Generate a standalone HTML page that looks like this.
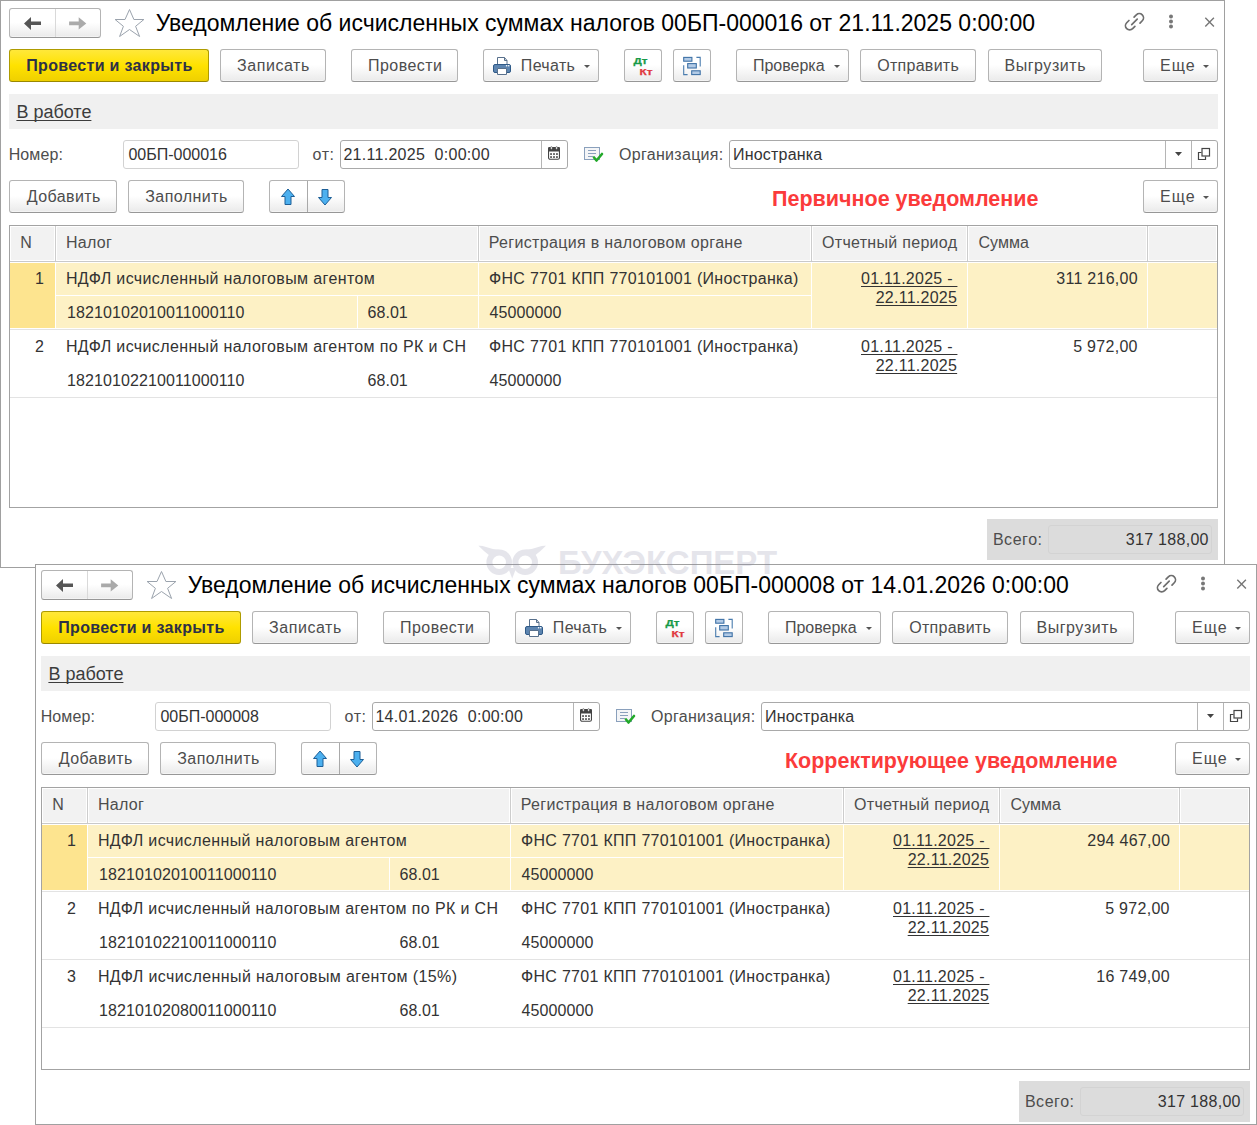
<!DOCTYPE html>
<html><head><meta charset="utf-8"><style>
html,body{margin:0;padding:0;}
body{width:1257px;height:1125px;overflow:hidden;position:relative;background:#fff;font-family:"Liberation Sans", sans-serif;}
.frame{position:absolute;border:1px solid #a0a0a0;box-sizing:border-box;background:#fff;}
.win{position:absolute;left:0;top:0;width:1257px;height:1125px;}
.t{position:absolute;line-height:1;white-space:pre;}
.r{position:absolute;}
.btn{position:absolute;box-sizing:border-box;border:1px solid #b4b4b4;border-bottom-color:#979797;border-radius:3px;background:linear-gradient(#ffffff 0%,#ffffff 48%,#eaeaea 100%);box-shadow:inset 0 -1px 0 rgba(255,255,255,.45);}
.yel{background:linear-gradient(#ffe83a 0%,#ffe200 50%,#efd000 100%);border-color:#ae9b00;border-bottom-color:#9a8800;box-shadow:none;}
</style></head><body>
<div class="frame" style="left:0;top:0;width:1225px;height:568px"></div>
<div class="win">
<div class="btn" style="left:9px;top:8px;width:92px;height:30px"></div>
<div class="r" style="left:55px;top:9px;width:1px;height:28px;background:#d9d9d9"></div>
<svg class="r" style="left:0;top:0" width="100" height="40"><path d="M24 23.5L31 17V21.6H41V25.1H31V30Z" fill="#555"/><path d="M86.3 23.4L78.7 17.2V21.5H69.1V25.3H78.7V29.6Z" fill="#aaa"/></svg>
<svg class="r" style="left:110px;top:5px" width="40" height="35"><path d="M19.5 4.5L23.9 14.5H33.9L25.6 21.3L29.6 31.5L19.5 24.5L9.6 31.5L13.4 21.3L5.1 14.5H15Z" fill="none" stroke="#9ba3ad" stroke-width="1"/></svg>
<div class="t" style="left:155.70px;top:12px;font-size:23px;color:#000;">Уведомление об исчисленных суммах налогов 00БП-000016 от 21.11.2025 0:00:00</div>
<svg class="r" style="left:1120px;top:8px" width="30" height="28"><g fill="none" stroke="#6e6e6e" stroke-width="1.7" stroke-linecap="round"><path d="M8.96 12.5L6.7 14.76A4.2 4.2 0 0 0 12.64 20.7L14.9 18.44"/><path d="M20.01 15.03L22.27 12.77A4.2 4.2 0 0 0 16.33 6.83L14.07 9.09"/><path d="M11.7 16.7L17.2 11.2"/></g></svg>
<svg class="r" style="left:1165px;top:12px" width="12" height="20"><g fill="#777"><circle cx="6" cy="4.4" r="2"/><circle cx="6" cy="9.4" r="2"/><circle cx="6" cy="14.4" r="2"/></g></svg>
<svg class="r" style="left:1200px;top:12px" width="20" height="20"><path d="M5.3 5.7L13.9 14.4M13.9 5.7L5.3 14.4" stroke="#777" stroke-width="1.4"/></svg>
<div class="btn yel" style="left:9px;top:49px;width:200px;height:33px"></div>
<div class="t" style="left:26.20px;top:58px;font-size:16px;color:#2d3047;font-weight:bold;letter-spacing:0.335px;">Провести и закрыть</div>
<div class="btn" style="left:220px;top:49px;width:106px;height:33px"></div>
<div class="t" style="left:236.90px;top:58px;font-size:16px;color:#4d4d4d;letter-spacing:0.586px;">Записать</div>
<div class="btn" style="left:351px;top:49px;width:107px;height:33px"></div>
<div class="t" style="left:368.10px;top:58px;font-size:16px;color:#4d4d4d;letter-spacing:0.429px;">Провести</div>
<div class="btn" style="left:860px;top:49px;width:116px;height:33px"></div>
<div class="t" style="left:877.20px;top:58px;font-size:16px;color:#4d4d4d;letter-spacing:0.287px;">Отправить</div>
<div class="btn" style="left:988px;top:49px;width:114px;height:33px"></div>
<div class="t" style="left:1004.40px;top:58px;font-size:16px;color:#4d4d4d;letter-spacing:0.563px;">Выгрузить</div>
<div class="btn" style="left:483px;top:49px;width:116px;height:33px"></div>
<svg class="r" style="left:490px;top:54px" width="24" height="24"><path d="M7.5 10V3.5H14.5L17 6.5V10" fill="#fff" stroke="#58708c" stroke-width="1"/><path d="M14.5 3.5V6.5H17" fill="none" stroke="#58708c" stroke-width="1"/><rect x="3.5" y="10.5" width="17" height="8" rx="1.5" fill="#5d85b0" stroke="#2f5a88" stroke-width="1"/><path d="M7.5 14.5H16.5V20.5H7.5Z" fill="#fff" stroke="#58708c" stroke-width="1"/><circle cx="16.6" cy="11.8" r="0.8" fill="#fff"/><circle cx="18.7" cy="11.8" r="0.8" fill="#fff"/></svg>
<div class="t" style="left:520.80px;top:58px;font-size:16px;color:#4d4d4d;letter-spacing:0.34px;">Печать</div>
<svg class="r" style="left:584px;top:65px" width="6" height="3" viewBox="0 0 6 3"><path d="M0 0H6L3 3Z" fill="#555"/></svg>
<div class="btn" style="left:624px;top:49px;width:38px;height:33px"></div>
<svg class="r" style="left:624px;top:49px" width="38" height="33" viewBox="624 49 38 33"><text x="633.5" y="64.3" font-family="Liberation Sans" font-weight="bold" font-size="9.2" textLength="14" lengthAdjust="spacingAndGlyphs" fill="#179a48" stroke="#179a48" stroke-width=".25">Дт</text><text x="639.6" y="74.9" font-family="Liberation Sans" font-weight="bold" font-size="9" textLength="13" lengthAdjust="spacingAndGlyphs" fill="#e0393f" stroke="#e0393f" stroke-width=".25">Кт</text></svg>
<div class="btn" style="left:673px;top:49px;width:38px;height:33px"></div>
<svg class="r" style="left:680px;top:54px" width="24" height="24"><g fill="#b3cbe6" stroke="#3f72a6" stroke-width="1.1"><rect x="3.7" y="3.4" width="8.2" height="3.8"/><rect x="7.7" y="9.6" width="8.6" height="4.4"/><rect x="11.7" y="16.8" width="8.5" height="3.8"/></g><path d="M16.4 3.4H20.2V12.5M3.7 11.3V20.6H7.6" fill="none" stroke="#4a7cae" stroke-width="1.1"/></svg>
<div class="btn" style="left:736px;top:49px;width:113px;height:33px"></div>
<div class="t" style="left:752.90px;top:58px;font-size:16px;color:#4d4d4d;">Проверка</div>
<svg class="r" style="left:834px;top:65px" width="6" height="3" viewBox="0 0 6 3"><path d="M0 0H6L3 3Z" fill="#555"/></svg>
<div class="btn" style="left:1143px;top:49px;width:75px;height:33px"></div>
<div class="t" style="left:1160.10px;top:58px;font-size:16px;color:#4d4d4d;letter-spacing:1.0px;">Еще</div>
<svg class="r" style="left:1203px;top:65px" width="6" height="3" viewBox="0 0 6 3"><path d="M0 0H6L3 3Z" fill="#555"/></svg>
<div class="r" style="left:9px;top:94px;width:1209px;height:35px;background:#f0f0f0"></div>
<div class="t" style="left:16.40px;top:103px;font-size:18px;color:#3c3c3c;text-decoration:underline;text-underline-offset:2px;text-decoration-skip-ink:none;">В работе</div>
<div class="t" style="left:8.70px;top:147px;font-size:16px;color:#4d4d4d;letter-spacing:0.1px;">Номер:</div>
<div class="r" style="left:123px;top:140px;width:176px;height:29px;border:1px solid #d2d2d2;border-radius:3px;background:#fff;box-sizing:border-box"></div>
<div class="t" style="left:128.40px;top:147px;font-size:16px;color:#333;">00БП-000016</div>
<div class="t" style="left:312.60px;top:147px;font-size:16px;color:#4d4d4d;letter-spacing:0.5px;">от:</div>
<div class="r" style="left:340px;top:140px;width:228px;height:29px;border:1px solid #a9a9a9;border-radius:3px;background:#fff;box-sizing:border-box"></div>
<div class="r" style="left:541px;top:141px;width:1px;height:27px;background:#b5b5b5"></div>
<div class="t" style="left:343.40px;top:147px;font-size:16px;color:#333;letter-spacing:0.283px;">21.11.2025  0:00:00</div>
<svg class="r" style="left:547px;top:146px" width="14" height="15"><rect x="1.55" y="1.55" width="10.9" height="11.7" rx="1.6" fill="#fff" stroke="#444" stroke-width="1.1"/><rect x="1" y="1" width="12" height="4.6" rx="1.4" fill="#444"/><rect x="3.6" y="0.6" width="1.6" height="2.8" rx=".8" fill="#fff" stroke="#444" stroke-width=".5"/><rect x="8.8" y="0.6" width="1.6" height="2.8" rx=".8" fill="#fff" stroke="#444" stroke-width=".5"/><g fill="#444"><rect x="3.2" y="7.2" width="1.7" height="1.7"/><rect x="6.15" y="7.2" width="1.7" height="1.7"/><rect x="9.1" y="7.2" width="1.7" height="1.7"/><rect x="3.2" y="10.2" width="1.7" height="1.7"/><rect x="6.15" y="10.2" width="1.7" height="1.7"/><rect x="9.1" y="10.2" width="1.7" height="1.7"/></g></svg>
<svg class="r" style="left:583px;top:146px" width="22" height="18"><rect x="1.5" y="1.5" width="15" height="12" fill="#f4f5f7" stroke="#8aa0bc" stroke-width="1"/><path d="M5 4.5H13M5 7.5H13M5 10.5H10" stroke="#8aa0bc" stroke-width="1"/><path d="M11 11.5L13.5 14.5L19 8" fill="none" stroke="#22a92a" stroke-width="2.6" stroke-linecap="round" stroke-linejoin="round"/></svg>
<div class="t" style="left:619.10px;top:147px;font-size:16px;color:#4d4d4d;letter-spacing:0.29px;">Организация:</div>
<div class="r" style="left:729px;top:140px;width:489px;height:29px;border:1px solid #a9a9a9;border-radius:3px;background:#fff;box-sizing:border-box"></div>
<div class="r" style="left:1165px;top:141px;width:1px;height:27px;background:#b5b5b5"></div>
<div class="r" style="left:1191px;top:141px;width:1px;height:27px;background:#b5b5b5"></div>
<div class="t" style="left:733.00px;top:147px;font-size:16px;color:#333;letter-spacing:0.2px;">Иностранка</div>
<svg class="r" style="left:1175px;top:152px" width="7" height="4"><path d="M0 0H7L3.5 4Z" fill="#444"/></svg>
<svg class="r" style="left:1196px;top:146px" width="16" height="16"><path d="M5.5 6.5H2.5V13.5H9.5V10.5" fill="none" stroke="#444" stroke-width="1.2"/><rect x="6" y="2.5" width="7.5" height="7.5" fill="none" stroke="#444" stroke-width="1.2"/></svg>
<div class="btn" style="left:9px;top:180px;width:108px;height:33px"></div>
<div class="t" style="left:26.80px;top:189px;font-size:16px;color:#4d4d4d;letter-spacing:0.414px;">Добавить</div>
<div class="btn" style="left:128px;top:180px;width:116px;height:33px"></div>
<div class="t" style="left:145.20px;top:189px;font-size:16px;color:#4d4d4d;letter-spacing:0.45px;">Заполнить</div>
<div class="btn" style="left:269px;top:180px;width:76px;height:33px"></div>
<div class="r" style="left:307px;top:181px;width:1px;height:31px;background:#a9a9a9"></div>
<svg class="r" style="left:278px;top:186px" width="60" height="22"><path d="M3.5 10.5L10 3L16.5 10.5H13V18.5H7V10.5Z" fill="#4cb0ef" stroke="#1d5f97" stroke-width="1" stroke-linejoin="round"/><path d="M40.5 11.5L47 19L53.5 11.5H50V3.5H44V11.5Z" fill="#4cb0ef" stroke="#1d5f97" stroke-width="1" stroke-linejoin="round"/></svg>
<div class="t" style="left:772.17px;top:188px;font-size:22px;font-weight:bold;color:#fb3b3b;transform:scaleX(0.978);transform-origin:0 0">Первичное уведомление</div>
<div class="btn" style="left:1143px;top:180px;width:75px;height:33px"></div>
<div class="t" style="left:1160.10px;top:189px;font-size:16px;color:#4d4d4d;letter-spacing:1.0px;">Еще</div>
<svg class="r" style="left:1203px;top:196px" width="6" height="3" viewBox="0 0 6 3"><path d="M0 0H6L3 3Z" fill="#555"/></svg>
<div class="r" style="left:9px;top:225px;width:1209px;height:283px;border:1px solid #a3a3a3;box-sizing:border-box;background:#fff"></div>
<div class="r" style="left:11px;top:227px;width:1205px;height:33px;background:#f2f2f2"></div>
<div class="r" style="left:10px;top:261px;width:1207px;height:1px;background:#c9c9c9"></div>
<div class="r" style="left:54px;top:227px;width:3px;height:33px;background:#fff"></div>
<div class="r" style="left:55px;top:226px;width:1px;height:35px;background:#cdcdcd"></div>
<div class="r" style="left:477px;top:227px;width:3px;height:33px;background:#fff"></div>
<div class="r" style="left:478px;top:226px;width:1px;height:35px;background:#cdcdcd"></div>
<div class="r" style="left:810px;top:227px;width:3px;height:33px;background:#fff"></div>
<div class="r" style="left:811px;top:226px;width:1px;height:35px;background:#cdcdcd"></div>
<div class="r" style="left:966px;top:227px;width:3px;height:33px;background:#fff"></div>
<div class="r" style="left:967px;top:226px;width:1px;height:35px;background:#cdcdcd"></div>
<div class="r" style="left:1146px;top:227px;width:3px;height:33px;background:#fff"></div>
<div class="r" style="left:1147px;top:226px;width:1px;height:35px;background:#cdcdcd"></div>
<div class="t" style="left:20.30px;top:235px;font-size:16px;color:#4d4d4d;">N</div>
<div class="t" style="left:65.90px;top:235px;font-size:16px;color:#4d4d4d;letter-spacing:0.3px;">Налог</div>
<div class="t" style="left:488.80px;top:235px;font-size:16px;color:#4d4d4d;letter-spacing:0.331px;">Регистрация в налоговом органе</div>
<div class="t" style="left:822.10px;top:235px;font-size:16px;color:#4d4d4d;letter-spacing:0.293px;">Отчетный период</div>
<div class="t" style="left:978.40px;top:235px;font-size:16px;color:#4d4d4d;letter-spacing:0.075px;">Сумма</div>
<div class="r" style="left:10px;top:263px;width:1207px;height:65px;background:#fdf1c5"></div>
<div class="r" style="left:10px;top:263px;width:45px;height:65px;background:#fde48f"></div>
<div class="r" style="left:55px;top:263px;width:1px;height:66px;background:#fff"></div>
<div class="r" style="left:56px;top:295px;width:755px;height:1px;background:#fff"></div>
<div class="r" style="left:357px;top:296px;width:1px;height:33px;background:#fff"></div>
<div class="r" style="left:478px;top:263px;width:1px;height:66px;background:#fff"></div>
<div class="r" style="left:811px;top:263px;width:1px;height:66px;background:#fff"></div>
<div class="r" style="left:967px;top:263px;width:1px;height:66px;background:#fff"></div>
<div class="r" style="left:1147px;top:263px;width:1px;height:66px;background:#fff"></div>
<div class="r" style="left:10px;top:329px;width:1207px;height:1px;background:#e3e3e3"></div>
<div class="t" style="left:35.00px;top:271px;font-size:16px;color:#333;">1</div>
<div class="t" style="left:65.90px;top:271px;font-size:16px;color:#333;letter-spacing:0.37px;">НДФЛ исчисленный налоговым агентом</div>
<div class="t" style="left:67.10px;top:305px;font-size:16px;color:#333;letter-spacing:0.095px;">18210102010011000110</div>
<div class="t" style="left:367.50px;top:305px;font-size:16px;color:#333;letter-spacing:0.05px;">68.01</div>
<div class="t" style="left:489.00px;top:271px;font-size:16px;color:#333;letter-spacing:0.297px;">ФНС 7701 КПП 770101001 (Иностранка)</div>
<div class="t" style="left:489.50px;top:305px;font-size:16px;color:#333;letter-spacing:0.1px;">45000000</div>
<div class="t" style="left:861.00px;top:271px;font-size:16px;color:#333;letter-spacing:0.256px;text-decoration:underline;text-underline-offset:2px;text-decoration-skip-ink:none;">01.11.2025 -&nbsp;</div>
<div class="t" style="left:875.70px;top:290px;font-size:16px;color:#333;letter-spacing:0.256px;text-decoration:underline;text-underline-offset:2px;text-decoration-skip-ink:none;">22.11.2025</div>
<div class="t" style="left:1056.20px;top:271px;font-size:16px;color:#333;letter-spacing:0.29px;">311 216,00</div>
<div class="r" style="left:10px;top:397px;width:1207px;height:1px;background:#e3e3e3"></div>
<div class="t" style="left:35.00px;top:339px;font-size:16px;color:#333;">2</div>
<div class="t" style="left:65.90px;top:339px;font-size:16px;color:#333;letter-spacing:0.368px;">НДФЛ исчисленный налоговым агентом по РК и СН</div>
<div class="t" style="left:67.10px;top:373px;font-size:16px;color:#333;letter-spacing:0.095px;">18210102210011000110</div>
<div class="t" style="left:367.50px;top:373px;font-size:16px;color:#333;letter-spacing:0.05px;">68.01</div>
<div class="t" style="left:489.00px;top:339px;font-size:16px;color:#333;letter-spacing:0.297px;">ФНС 7701 КПП 770101001 (Иностранка)</div>
<div class="t" style="left:489.50px;top:373px;font-size:16px;color:#333;letter-spacing:0.1px;">45000000</div>
<div class="t" style="left:861.00px;top:339px;font-size:16px;color:#333;letter-spacing:0.256px;text-decoration:underline;text-underline-offset:2px;text-decoration-skip-ink:none;">01.11.2025 -&nbsp;</div>
<div class="t" style="left:875.70px;top:358px;font-size:16px;color:#333;letter-spacing:0.256px;text-decoration:underline;text-underline-offset:2px;text-decoration-skip-ink:none;">22.11.2025</div>
<div class="t" style="left:1073.20px;top:339px;font-size:16px;color:#333;letter-spacing:0.29px;">5 972,00</div>
<div class="r" style="left:987px;top:519px;width:231px;height:41px;background:#dcdcdc"></div>
<div class="r" style="left:1048px;top:525px;width:164px;height:29px;border:1px solid #d3d3d3;border-radius:3px;box-sizing:border-box"></div>
<div class="t" style="left:992.90px;top:532px;font-size:16px;color:#4d4d4d;letter-spacing:0.55px;">Всего:</div>
<div class="t" style="left:1125.80px;top:532px;font-size:16px;color:#333;letter-spacing:0.289px;">317 188,00</div>
</div>
<div class="frame" style="left:35px;top:564px;width:1222px;height:561px"></div>
<div class="win" style="transform:translate(32px,562px)">
<div class="btn" style="left:9px;top:8px;width:92px;height:30px"></div>
<div class="r" style="left:55px;top:9px;width:1px;height:28px;background:#d9d9d9"></div>
<svg class="r" style="left:0;top:0" width="100" height="40"><path d="M24 23.5L31 17V21.6H41V25.1H31V30Z" fill="#555"/><path d="M86.3 23.4L78.7 17.2V21.5H69.1V25.3H78.7V29.6Z" fill="#aaa"/></svg>
<svg class="r" style="left:110px;top:5px" width="40" height="35"><path d="M19.5 4.5L23.9 14.5H33.9L25.6 21.3L29.6 31.5L19.5 24.5L9.6 31.5L13.4 21.3L5.1 14.5H15Z" fill="none" stroke="#9ba3ad" stroke-width="1"/></svg>
<div class="t" style="left:155.70px;top:12px;font-size:23px;color:#000;">Уведомление об исчисленных суммах налогов 00БП-000008 от 14.01.2026 0:00:00</div>
<svg class="r" style="left:1120px;top:8px" width="30" height="28"><g fill="none" stroke="#6e6e6e" stroke-width="1.7" stroke-linecap="round"><path d="M8.96 12.5L6.7 14.76A4.2 4.2 0 0 0 12.64 20.7L14.9 18.44"/><path d="M20.01 15.03L22.27 12.77A4.2 4.2 0 0 0 16.33 6.83L14.07 9.09"/><path d="M11.7 16.7L17.2 11.2"/></g></svg>
<svg class="r" style="left:1165px;top:12px" width="12" height="20"><g fill="#777"><circle cx="6" cy="4.4" r="2"/><circle cx="6" cy="9.4" r="2"/><circle cx="6" cy="14.4" r="2"/></g></svg>
<svg class="r" style="left:1200px;top:12px" width="20" height="20"><path d="M5.3 5.7L13.9 14.4M13.9 5.7L5.3 14.4" stroke="#777" stroke-width="1.4"/></svg>
<div class="btn yel" style="left:9px;top:49px;width:200px;height:33px"></div>
<div class="t" style="left:26.20px;top:58px;font-size:16px;color:#2d3047;font-weight:bold;letter-spacing:0.335px;">Провести и закрыть</div>
<div class="btn" style="left:220px;top:49px;width:106px;height:33px"></div>
<div class="t" style="left:236.90px;top:58px;font-size:16px;color:#4d4d4d;letter-spacing:0.586px;">Записать</div>
<div class="btn" style="left:351px;top:49px;width:107px;height:33px"></div>
<div class="t" style="left:368.10px;top:58px;font-size:16px;color:#4d4d4d;letter-spacing:0.429px;">Провести</div>
<div class="btn" style="left:860px;top:49px;width:116px;height:33px"></div>
<div class="t" style="left:877.20px;top:58px;font-size:16px;color:#4d4d4d;letter-spacing:0.287px;">Отправить</div>
<div class="btn" style="left:988px;top:49px;width:114px;height:33px"></div>
<div class="t" style="left:1004.40px;top:58px;font-size:16px;color:#4d4d4d;letter-spacing:0.563px;">Выгрузить</div>
<div class="btn" style="left:483px;top:49px;width:116px;height:33px"></div>
<svg class="r" style="left:490px;top:54px" width="24" height="24"><path d="M7.5 10V3.5H14.5L17 6.5V10" fill="#fff" stroke="#58708c" stroke-width="1"/><path d="M14.5 3.5V6.5H17" fill="none" stroke="#58708c" stroke-width="1"/><rect x="3.5" y="10.5" width="17" height="8" rx="1.5" fill="#5d85b0" stroke="#2f5a88" stroke-width="1"/><path d="M7.5 14.5H16.5V20.5H7.5Z" fill="#fff" stroke="#58708c" stroke-width="1"/><circle cx="16.6" cy="11.8" r="0.8" fill="#fff"/><circle cx="18.7" cy="11.8" r="0.8" fill="#fff"/></svg>
<div class="t" style="left:520.80px;top:58px;font-size:16px;color:#4d4d4d;letter-spacing:0.34px;">Печать</div>
<svg class="r" style="left:584px;top:65px" width="6" height="3" viewBox="0 0 6 3"><path d="M0 0H6L3 3Z" fill="#555"/></svg>
<div class="btn" style="left:624px;top:49px;width:38px;height:33px"></div>
<svg class="r" style="left:624px;top:49px" width="38" height="33" viewBox="624 49 38 33"><text x="633.5" y="64.3" font-family="Liberation Sans" font-weight="bold" font-size="9.2" textLength="14" lengthAdjust="spacingAndGlyphs" fill="#179a48" stroke="#179a48" stroke-width=".25">Дт</text><text x="639.6" y="74.9" font-family="Liberation Sans" font-weight="bold" font-size="9" textLength="13" lengthAdjust="spacingAndGlyphs" fill="#e0393f" stroke="#e0393f" stroke-width=".25">Кт</text></svg>
<div class="btn" style="left:673px;top:49px;width:38px;height:33px"></div>
<svg class="r" style="left:680px;top:54px" width="24" height="24"><g fill="#b3cbe6" stroke="#3f72a6" stroke-width="1.1"><rect x="3.7" y="3.4" width="8.2" height="3.8"/><rect x="7.7" y="9.6" width="8.6" height="4.4"/><rect x="11.7" y="16.8" width="8.5" height="3.8"/></g><path d="M16.4 3.4H20.2V12.5M3.7 11.3V20.6H7.6" fill="none" stroke="#4a7cae" stroke-width="1.1"/></svg>
<div class="btn" style="left:736px;top:49px;width:113px;height:33px"></div>
<div class="t" style="left:752.90px;top:58px;font-size:16px;color:#4d4d4d;">Проверка</div>
<svg class="r" style="left:834px;top:65px" width="6" height="3" viewBox="0 0 6 3"><path d="M0 0H6L3 3Z" fill="#555"/></svg>
<div class="btn" style="left:1143px;top:49px;width:75px;height:33px"></div>
<div class="t" style="left:1160.10px;top:58px;font-size:16px;color:#4d4d4d;letter-spacing:1.0px;">Еще</div>
<svg class="r" style="left:1203px;top:65px" width="6" height="3" viewBox="0 0 6 3"><path d="M0 0H6L3 3Z" fill="#555"/></svg>
<div class="r" style="left:9px;top:94px;width:1209px;height:35px;background:#f0f0f0"></div>
<div class="t" style="left:16.40px;top:103px;font-size:18px;color:#3c3c3c;text-decoration:underline;text-underline-offset:2px;text-decoration-skip-ink:none;">В работе</div>
<div class="t" style="left:8.70px;top:147px;font-size:16px;color:#4d4d4d;letter-spacing:0.1px;">Номер:</div>
<div class="r" style="left:123px;top:140px;width:176px;height:29px;border:1px solid #d2d2d2;border-radius:3px;background:#fff;box-sizing:border-box"></div>
<div class="t" style="left:128.40px;top:147px;font-size:16px;color:#333;">00БП-000008</div>
<div class="t" style="left:312.60px;top:147px;font-size:16px;color:#4d4d4d;letter-spacing:0.5px;">от:</div>
<div class="r" style="left:340px;top:140px;width:228px;height:29px;border:1px solid #a9a9a9;border-radius:3px;background:#fff;box-sizing:border-box"></div>
<div class="r" style="left:541px;top:141px;width:1px;height:27px;background:#b5b5b5"></div>
<div class="t" style="left:343.40px;top:147px;font-size:16px;color:#333;letter-spacing:0.283px;">14.01.2026  0:00:00</div>
<svg class="r" style="left:547px;top:146px" width="14" height="15"><rect x="1.55" y="1.55" width="10.9" height="11.7" rx="1.6" fill="#fff" stroke="#444" stroke-width="1.1"/><rect x="1" y="1" width="12" height="4.6" rx="1.4" fill="#444"/><rect x="3.6" y="0.6" width="1.6" height="2.8" rx=".8" fill="#fff" stroke="#444" stroke-width=".5"/><rect x="8.8" y="0.6" width="1.6" height="2.8" rx=".8" fill="#fff" stroke="#444" stroke-width=".5"/><g fill="#444"><rect x="3.2" y="7.2" width="1.7" height="1.7"/><rect x="6.15" y="7.2" width="1.7" height="1.7"/><rect x="9.1" y="7.2" width="1.7" height="1.7"/><rect x="3.2" y="10.2" width="1.7" height="1.7"/><rect x="6.15" y="10.2" width="1.7" height="1.7"/><rect x="9.1" y="10.2" width="1.7" height="1.7"/></g></svg>
<svg class="r" style="left:583px;top:146px" width="22" height="18"><rect x="1.5" y="1.5" width="15" height="12" fill="#f4f5f7" stroke="#8aa0bc" stroke-width="1"/><path d="M5 4.5H13M5 7.5H13M5 10.5H10" stroke="#8aa0bc" stroke-width="1"/><path d="M11 11.5L13.5 14.5L19 8" fill="none" stroke="#22a92a" stroke-width="2.6" stroke-linecap="round" stroke-linejoin="round"/></svg>
<div class="t" style="left:619.10px;top:147px;font-size:16px;color:#4d4d4d;letter-spacing:0.29px;">Организация:</div>
<div class="r" style="left:729px;top:140px;width:489px;height:29px;border:1px solid #a9a9a9;border-radius:3px;background:#fff;box-sizing:border-box"></div>
<div class="r" style="left:1165px;top:141px;width:1px;height:27px;background:#b5b5b5"></div>
<div class="r" style="left:1191px;top:141px;width:1px;height:27px;background:#b5b5b5"></div>
<div class="t" style="left:733.00px;top:147px;font-size:16px;color:#333;letter-spacing:0.2px;">Иностранка</div>
<svg class="r" style="left:1175px;top:152px" width="7" height="4"><path d="M0 0H7L3.5 4Z" fill="#444"/></svg>
<svg class="r" style="left:1196px;top:146px" width="16" height="16"><path d="M5.5 6.5H2.5V13.5H9.5V10.5" fill="none" stroke="#444" stroke-width="1.2"/><rect x="6" y="2.5" width="7.5" height="7.5" fill="none" stroke="#444" stroke-width="1.2"/></svg>
<div class="btn" style="left:9px;top:180px;width:108px;height:33px"></div>
<div class="t" style="left:26.80px;top:189px;font-size:16px;color:#4d4d4d;letter-spacing:0.414px;">Добавить</div>
<div class="btn" style="left:128px;top:180px;width:116px;height:33px"></div>
<div class="t" style="left:145.20px;top:189px;font-size:16px;color:#4d4d4d;letter-spacing:0.45px;">Заполнить</div>
<div class="btn" style="left:269px;top:180px;width:76px;height:33px"></div>
<div class="r" style="left:307px;top:181px;width:1px;height:31px;background:#a9a9a9"></div>
<svg class="r" style="left:278px;top:186px" width="60" height="22"><path d="M3.5 10.5L10 3L16.5 10.5H13V18.5H7V10.5Z" fill="#4cb0ef" stroke="#1d5f97" stroke-width="1" stroke-linejoin="round"/><path d="M40.5 11.5L47 19L53.5 11.5H50V3.5H44V11.5Z" fill="#4cb0ef" stroke="#1d5f97" stroke-width="1" stroke-linejoin="round"/></svg>
<div class="t" style="left:752.87px;top:188px;font-size:22px;font-weight:bold;color:#fb3b3b;transform:scaleX(0.976);transform-origin:0 0">Корректирующее уведомление</div>
<div class="btn" style="left:1143px;top:180px;width:75px;height:33px"></div>
<div class="t" style="left:1160.10px;top:189px;font-size:16px;color:#4d4d4d;letter-spacing:1.0px;">Еще</div>
<svg class="r" style="left:1203px;top:196px" width="6" height="3" viewBox="0 0 6 3"><path d="M0 0H6L3 3Z" fill="#555"/></svg>
<div class="r" style="left:9px;top:225px;width:1209px;height:283px;border:1px solid #a3a3a3;box-sizing:border-box;background:#fff"></div>
<div class="r" style="left:11px;top:227px;width:1205px;height:33px;background:#f2f2f2"></div>
<div class="r" style="left:10px;top:261px;width:1207px;height:1px;background:#c9c9c9"></div>
<div class="r" style="left:54px;top:227px;width:3px;height:33px;background:#fff"></div>
<div class="r" style="left:55px;top:226px;width:1px;height:35px;background:#cdcdcd"></div>
<div class="r" style="left:477px;top:227px;width:3px;height:33px;background:#fff"></div>
<div class="r" style="left:478px;top:226px;width:1px;height:35px;background:#cdcdcd"></div>
<div class="r" style="left:810px;top:227px;width:3px;height:33px;background:#fff"></div>
<div class="r" style="left:811px;top:226px;width:1px;height:35px;background:#cdcdcd"></div>
<div class="r" style="left:966px;top:227px;width:3px;height:33px;background:#fff"></div>
<div class="r" style="left:967px;top:226px;width:1px;height:35px;background:#cdcdcd"></div>
<div class="r" style="left:1146px;top:227px;width:3px;height:33px;background:#fff"></div>
<div class="r" style="left:1147px;top:226px;width:1px;height:35px;background:#cdcdcd"></div>
<div class="t" style="left:20.30px;top:235px;font-size:16px;color:#4d4d4d;">N</div>
<div class="t" style="left:65.90px;top:235px;font-size:16px;color:#4d4d4d;letter-spacing:0.3px;">Налог</div>
<div class="t" style="left:488.80px;top:235px;font-size:16px;color:#4d4d4d;letter-spacing:0.331px;">Регистрация в налоговом органе</div>
<div class="t" style="left:822.10px;top:235px;font-size:16px;color:#4d4d4d;letter-spacing:0.293px;">Отчетный период</div>
<div class="t" style="left:978.40px;top:235px;font-size:16px;color:#4d4d4d;letter-spacing:0.075px;">Сумма</div>
<div class="r" style="left:10px;top:263px;width:1207px;height:65px;background:#fdf1c5"></div>
<div class="r" style="left:10px;top:263px;width:45px;height:65px;background:#fde48f"></div>
<div class="r" style="left:55px;top:263px;width:1px;height:66px;background:#fff"></div>
<div class="r" style="left:56px;top:295px;width:755px;height:1px;background:#fff"></div>
<div class="r" style="left:357px;top:296px;width:1px;height:33px;background:#fff"></div>
<div class="r" style="left:478px;top:263px;width:1px;height:66px;background:#fff"></div>
<div class="r" style="left:811px;top:263px;width:1px;height:66px;background:#fff"></div>
<div class="r" style="left:967px;top:263px;width:1px;height:66px;background:#fff"></div>
<div class="r" style="left:1147px;top:263px;width:1px;height:66px;background:#fff"></div>
<div class="r" style="left:10px;top:329px;width:1207px;height:1px;background:#e3e3e3"></div>
<div class="t" style="left:35.00px;top:271px;font-size:16px;color:#333;">1</div>
<div class="t" style="left:65.90px;top:271px;font-size:16px;color:#333;letter-spacing:0.37px;">НДФЛ исчисленный налоговым агентом</div>
<div class="t" style="left:67.10px;top:305px;font-size:16px;color:#333;letter-spacing:0.095px;">18210102010011000110</div>
<div class="t" style="left:367.50px;top:305px;font-size:16px;color:#333;letter-spacing:0.05px;">68.01</div>
<div class="t" style="left:489.00px;top:271px;font-size:16px;color:#333;letter-spacing:0.297px;">ФНС 7701 КПП 770101001 (Иностранка)</div>
<div class="t" style="left:489.50px;top:305px;font-size:16px;color:#333;letter-spacing:0.1px;">45000000</div>
<div class="t" style="left:861.00px;top:271px;font-size:16px;color:#333;letter-spacing:0.256px;text-decoration:underline;text-underline-offset:2px;text-decoration-skip-ink:none;">01.11.2025 -&nbsp;</div>
<div class="t" style="left:875.70px;top:290px;font-size:16px;color:#333;letter-spacing:0.256px;text-decoration:underline;text-underline-offset:2px;text-decoration-skip-ink:none;">22.11.2025</div>
<div class="t" style="left:1055.20px;top:271px;font-size:16px;color:#333;letter-spacing:0.29px;">294 467,00</div>
<div class="r" style="left:10px;top:397px;width:1207px;height:1px;background:#e3e3e3"></div>
<div class="t" style="left:35.00px;top:339px;font-size:16px;color:#333;">2</div>
<div class="t" style="left:65.90px;top:339px;font-size:16px;color:#333;letter-spacing:0.368px;">НДФЛ исчисленный налоговым агентом по РК и СН</div>
<div class="t" style="left:67.10px;top:373px;font-size:16px;color:#333;letter-spacing:0.095px;">18210102210011000110</div>
<div class="t" style="left:367.50px;top:373px;font-size:16px;color:#333;letter-spacing:0.05px;">68.01</div>
<div class="t" style="left:489.00px;top:339px;font-size:16px;color:#333;letter-spacing:0.297px;">ФНС 7701 КПП 770101001 (Иностранка)</div>
<div class="t" style="left:489.50px;top:373px;font-size:16px;color:#333;letter-spacing:0.1px;">45000000</div>
<div class="t" style="left:861.00px;top:339px;font-size:16px;color:#333;letter-spacing:0.256px;text-decoration:underline;text-underline-offset:2px;text-decoration-skip-ink:none;">01.11.2025 -&nbsp;</div>
<div class="t" style="left:875.70px;top:358px;font-size:16px;color:#333;letter-spacing:0.256px;text-decoration:underline;text-underline-offset:2px;text-decoration-skip-ink:none;">22.11.2025</div>
<div class="t" style="left:1073.20px;top:339px;font-size:16px;color:#333;letter-spacing:0.29px;">5 972,00</div>
<div class="r" style="left:10px;top:465px;width:1207px;height:1px;background:#e3e3e3"></div>
<div class="t" style="left:35.00px;top:407px;font-size:16px;color:#333;">3</div>
<div class="t" style="left:65.90px;top:407px;font-size:16px;color:#333;letter-spacing:0.397px;">НДФЛ исчисленный налоговым агентом (15%)</div>
<div class="t" style="left:67.10px;top:441px;font-size:16px;color:#333;letter-spacing:0.095px;">18210102080011000110</div>
<div class="t" style="left:367.50px;top:441px;font-size:16px;color:#333;letter-spacing:0.05px;">68.01</div>
<div class="t" style="left:489.00px;top:407px;font-size:16px;color:#333;letter-spacing:0.297px;">ФНС 7701 КПП 770101001 (Иностранка)</div>
<div class="t" style="left:489.50px;top:441px;font-size:16px;color:#333;letter-spacing:0.1px;">45000000</div>
<div class="t" style="left:861.00px;top:407px;font-size:16px;color:#333;letter-spacing:0.256px;text-decoration:underline;text-underline-offset:2px;text-decoration-skip-ink:none;">01.11.2025 -&nbsp;</div>
<div class="t" style="left:875.70px;top:426px;font-size:16px;color:#333;letter-spacing:0.256px;text-decoration:underline;text-underline-offset:2px;text-decoration-skip-ink:none;">22.11.2025</div>
<div class="t" style="left:1064.20px;top:407px;font-size:16px;color:#333;letter-spacing:0.29px;">16 749,00</div>
<div class="r" style="left:987px;top:519px;width:231px;height:41px;background:#dcdcdc"></div>
<div class="r" style="left:1048px;top:525px;width:164px;height:29px;border:1px solid #d3d3d3;border-radius:3px;box-sizing:border-box"></div>
<div class="t" style="left:992.90px;top:532px;font-size:16px;color:#4d4d4d;letter-spacing:0.55px;">Всего:</div>
<div class="t" style="left:1125.80px;top:532px;font-size:16px;color:#333;letter-spacing:0.289px;">317 188,00</div>
</div>
<svg style="position:absolute;left:470px;top:538px" width="320" height="46" viewBox="470 538 320 46">
<g fill="rgb(135,135,165)" opacity="0.21">
<path fill-rule="evenodd" d="M486.4 562.3a12.8 12.8 0 1 0 25.6 0a12.8 12.8 0 1 0 -25.6 0ZM492.4 562.3a6.8 6.8 0 1 1 13.6 0a6.8 6.8 0 1 1 -13.6 0Z"/>
<path fill-rule="evenodd" d="M512.4 562.3a12.8 12.8 0 1 0 25.6 0a12.8 12.8 0 1 0 -25.6 0ZM518.4 562.3a6.8 6.8 0 1 1 13.6 0a6.8 6.8 0 1 1 -13.6 0Z"/>
<path d="M478.5 545.8Q482 545.6 486 547Q493 549.6 499.2 549.8L489.2 555.3Q484 551.5 478.5 545.8Z"/>
<path d="M545.9 545.8Q542.4 545.6 538.4 547Q531.4 549.6 525.2 549.8L535.2 555.3Q540.4 551.5 545.9 545.8Z"/>
<path d="M508.2 568L512.2 578.5L516.2 568Z"/>
<text x="558" y="574" font-family="Liberation Sans" font-weight="bold" font-size="33">БУХЭКСПЕРТ</text>
</g>
</svg>

</body></html>
